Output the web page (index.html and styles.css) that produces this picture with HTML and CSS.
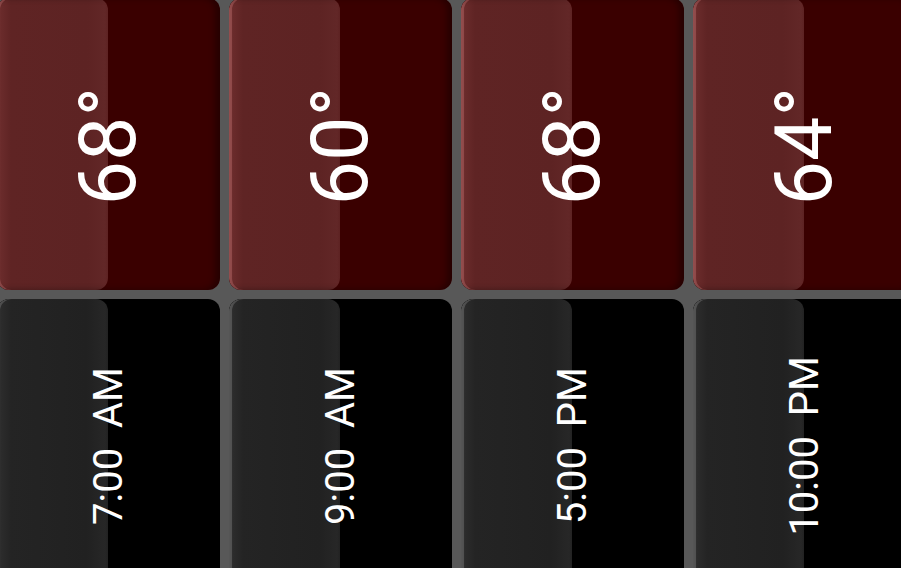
FILE: index.html
```html
<!DOCTYPE html>
<html>
<head>
<meta charset="utf-8">
<link rel="stylesheet" href="styles.css">
</head>
<body>
<div class="board">
  <div class="tile temp"><span class="label big">68°</span></div>
  <div class="tile temp"><span class="label big">60°</span></div>
  <div class="tile temp"><span class="label big">68°</span></div>
  <div class="tile temp"><span class="label big">64°</span></div>
  <div class="tile time"><span class="label small">7:00  AM</span></div>
  <div class="tile time"><span class="label small">9:00  AM</span></div>
  <div class="tile time"><span class="label small">5:00  PM</span></div>
  <div class="tile time"><span class="label small">10:00  PM</span></div>
</div>
</body>
</html>
```
FILE: styles.css
```css
html, body {
  margin: 0;
  padding: 0;
  width: 901px;
  height: 568px;
  overflow: hidden;
  background: #585858;
}

.board {
  display: grid;
  grid-template-columns: repeat(4, 223px);
  grid-template-rows: 292px 293px;
  column-gap: 9px;
  row-gap: 9px;
  margin-left: -3px;
  margin-top: -2px;
}

.tile {
  position: relative;
  border-radius: 12px;
  display: flex;
  align-items: center;
  justify-content: center;
  overflow: hidden;
}

.tile::before {
  content: "";
  position: absolute;
  left: 0;
  top: 0;
  bottom: 0;
  width: 111px;
  border-radius: 12px;
}

.tile::after {
  content: "";
  position: absolute;
  inset: 0;
  border-radius: 12px;
  pointer-events: none;
}

.temp {
  background: #3a0000;
  padding-top: 5px;
}

.temp::before {
  background: linear-gradient(to right, #7a3a3a 0, #6a2b2b 4px, #5f2424 14px, #5d2323 90px, #622727 108px, #5d2222 111px);
}

.temp::after {
  box-shadow: inset 3px 0 0 rgba(200, 120, 120, 0.35), inset -5px 0 6px rgba(0, 0, 0, 0.35);
}

.time {
  background: #000;
}

.time::before {
  background: linear-gradient(to right, #3c3c3c 0, #2c2c2c 4px, #242424 14px, #212121 90px, #272727 108px, #222 111px);
}

.time::after {
  box-shadow: inset 3px 0 0 rgba(120, 120, 120, 0.45);
}

.label {
  position: relative;
  z-index: 1;
  color: #fff;
  font-family: Roboto, "Liberation Sans", sans-serif;
  writing-mode: vertical-rl;
  transform: rotate(180deg);
  white-space: pre;
  line-height: 1;
}

.big {
  font-size: 79px;
}

.small {
  font-size: 40px;
}
```
